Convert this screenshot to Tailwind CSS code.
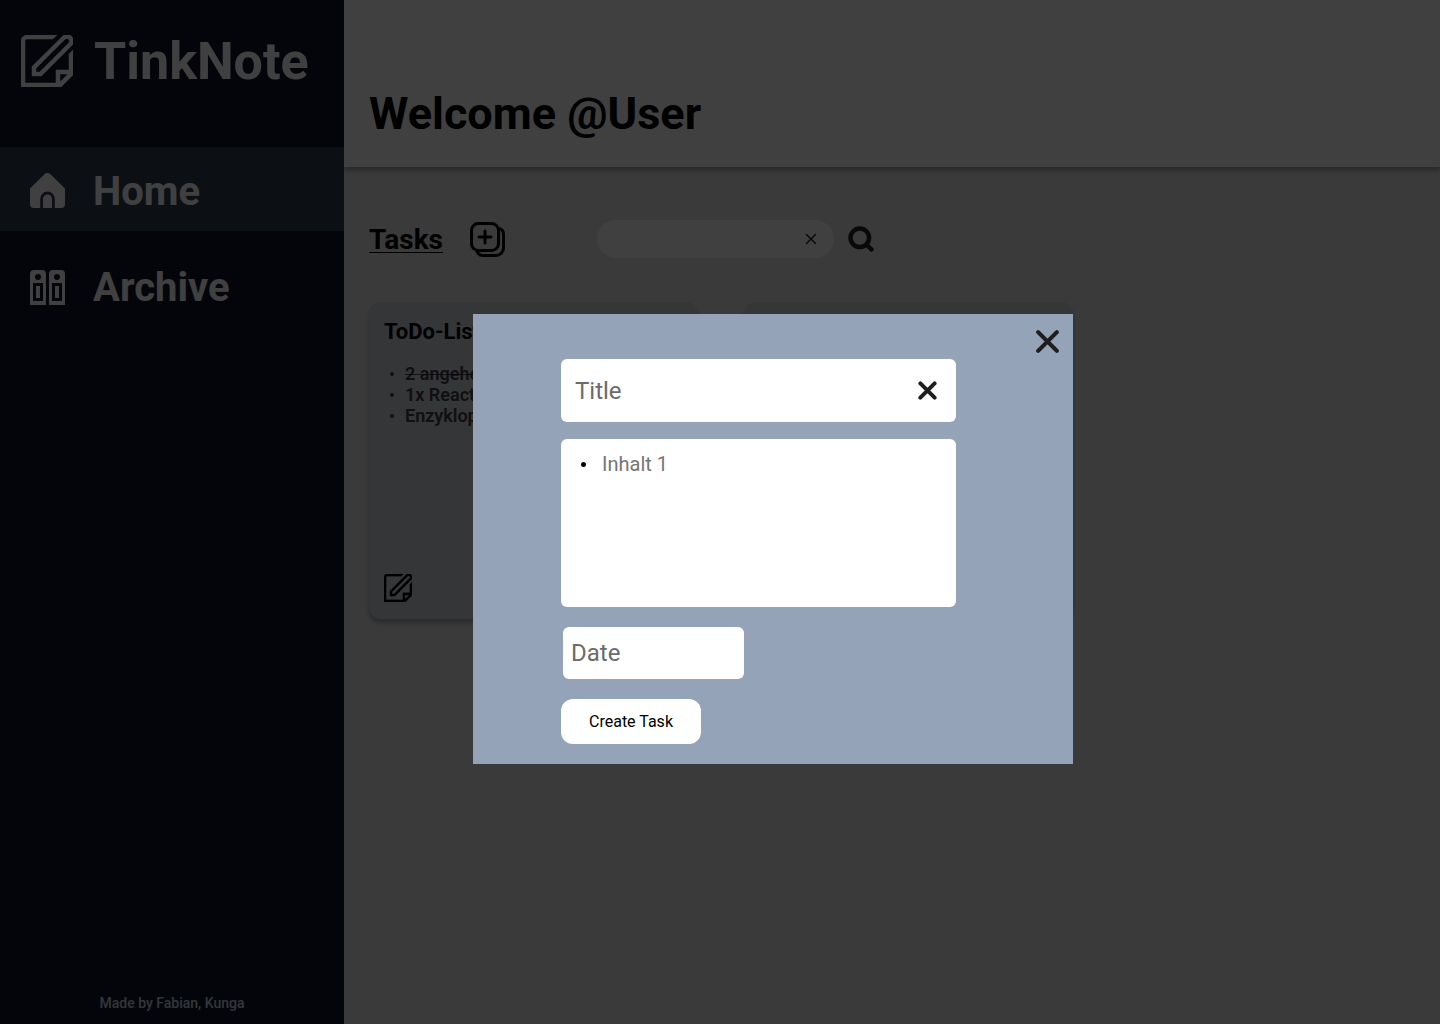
<!DOCTYPE html>
<html lang="en">
<head>
<meta charset="utf-8">
<meta name="viewport" content="width=device-width, initial-scale=1">
<title>TinkNote</title>
<script src="https://cdn.jsdelivr.net/npm/@tailwindcss/browser@4"></script>
</head>
<body class="font-[Roboto,sans-serif] text-black">
<svg class="hidden" aria-hidden="true">
  <symbol id="note-edit" viewBox="0 0 52 52">
    <path fill="currentColor" stroke="currentColor" stroke-width="0.500" fill-rule="evenodd" d="M36 0H6a6 6 0 0 0-6 6v46h40l12-12V15l-4 4v16H35v13H4V6a2 2 0 0 1 2-2h26zM39 39h8l-8 8z"/>
    <path fill="none" stroke="currentColor" stroke-width="4.500" d="M13 39v-6.500L42.750 2.750a4.600 4.600 0 0 1 6.500 6.500L19.500 39z"/>
  </symbol>
  <symbol id="cross" viewBox="0 0 24 24">
    <path fill="none" stroke="currentColor" stroke-linecap="round" d="M3 3l18 18M21 3L3 21"/>
  </symbol>
</svg>

<div class="flex min-h-screen bg-[#e5e7eb]">
  <aside class="flex w-[344px] shrink-0 flex-col bg-[#0f172a] text-white">
    <div class="flex h-[147px] items-start gap-[21px] pt-[35px] pl-[21px]">
      <svg class="size-[52px]"><use href="#note-edit"/></svg>
      <span class="text-[52px] leading-[54px] font-bold">TinkNote</span>
    </div>
    <nav class="flex flex-col gap-[14px] text-[40px] font-bold">
      <a href="#" class="flex h-[84px] items-center gap-7 bg-[#334155] pt-[3px] pl-[30px]">
        <svg class="size-[35px]" viewBox="0 0 35 35" fill="currentColor">
          <path d="M14.500 1.200a4.500 4.500 0 0 1 6 0L35 15.500V31a4 4 0 0 1-4 4h-6.200V25.800a7.300 7.300 0 0 0-14.600 0V35H4a4 4 0 0 1-4-4V15.500z"/>
          <path d="M13 35v-9a4.500 4.500 0 0 1 9 0v9z"/>
        </svg>
        <span class="pt-0.5">Home</span>
      </a>
      <a href="#" class="flex h-[84px] items-center gap-7 pl-[30px]">
        <svg class="size-[35px]" viewBox="0 0 35 35" fill="currentColor" fill-rule="evenodd">
          <path d="M0 35V4a4 4 0 0 1 4-4h8a4 4 0 0 1 4 4v31zM8 4a3 3 0 0 0 0 6a3 3 0 0 0 0-6zM3 13v18h10V13zM6 16h4v12H6z"/>
          <path d="M19 35V4a4 4 0 0 1 4-4h8a4 4 0 0 1 4 4v31zM27 4a3 3 0 0 0 0 6a3 3 0 0 0 0-6zM22 13v18h10V13zM25 16h4v12h-4z"/>
        </svg>
        <span class="pt-0.5">Archive</span>
      </a>
    </nav>
    <p class="mt-auto pb-[11px] text-center text-sm font-medium text-[#cbd5e1]">Made by Fabian, Kunga</p>
  </aside>

  <main class="min-w-0 flex-1">
    <header class="flex h-[167px] items-end bg-white px-[25px] pb-[26px] shadow-[0_4px_4px_rgba(0,0,0,0.25)]">
      <h1 class="text-[45px] leading-[54px] font-bold">Welcome @User</h1>
    </header>

    <section class="px-[25px] pt-[53px]">
      <div class="flex h-[38px] items-center">
        <h2 class="pt-0.5 text-[28px] leading-8 font-bold underline decoration-1 underline-offset-3">Tasks</h2>
        <button type="button" aria-label="Add task" class="ml-[27px] pt-0.5">
          <svg class="size-[36px]" viewBox="0 0 36 36" fill="none" stroke="currentColor" stroke-width="3" stroke-linecap="round">
            <rect x="1.500" y="1.500" width="27" height="27" rx="7"/>
            <path d="M15 9v12M9 15h12M29 6.500c3 .8 4.500 3 4.500 6V26a7.500 7.500 0 0 1-7.500 7.500H13c-3 0-5.200-1.500-6-4.500"/>
          </svg>
        </button>
        <form class="ml-[91px] flex items-center">
          <div class="flex h-[38px] w-[237px] items-center rounded-full bg-white pr-[17px] pl-4">
            <input type="text" aria-label="Search tasks" class="min-w-0 flex-1 outline-none">
            <button type="button" aria-label="Clear search" class="text-neutral-800"><svg class="size-3" stroke-width="3"><use href="#cross"/></svg></button>
          </div>
          <button type="submit" aria-label="Search" class="ml-[14px] text-neutral-800">
            <svg class="size-[26px]" viewBox="0 0 26 26" fill="none" stroke="currentColor" stroke-width="4.500" stroke-linecap="round"><circle cx="11.800" cy="11.800" r="9.300"/><path d="M19 19l4.500 4.500"/></svg>
          </button>
        </form>
      </div>

      <div class="mt-11 flex flex-wrap gap-[46px]">
        <article class="flex h-[317px] w-[329px] flex-col rounded-xl bg-[#d1d5db] px-[15px] pt-4 pb-[17px] shadow-[0_4px_4px_rgba(0,0,0,0.25)]">
          <h3 class="text-[22px] leading-7 font-bold">ToDo-List</h3>
          <ul class="mt-[17px] pl-[6px] text-lg leading-[21px] font-semibold text-neutral-700">
            <li class="flex items-center gap-[11px] before:size-1 before:rounded-full before:bg-current"><s class="decoration-black/60 decoration-1">2 angehen</s></li>
            <li class="flex items-center gap-[11px] before:size-1 before:rounded-full before:bg-current">1x React</li>
            <li class="flex items-center gap-[11px] before:size-1 before:rounded-full before:bg-current">Enzyklopädie</li>
          </ul>
          <button type="button" aria-label="Edit task" class="mt-auto self-start"><svg class="size-7"><use href="#note-edit"/></svg></button>
        </article>
        <article class="h-[317px] w-[329px] rounded-xl bg-[#d1d5db] shadow-[0_4px_4px_rgba(0,0,0,0.25)]"></article>
      </div>
    </section>
  </main>
</div>

<div class="fixed inset-0 flex items-center justify-center bg-black/75 pt-[54px] pl-[106px]">
  <form role="dialog" aria-label="Create task" class="relative flex h-[450px] w-[600px] flex-col items-start bg-[#94a3b8] pt-[45px] pl-[88px]">
    <button type="button" aria-label="Close" class="absolute top-[15px] right-[13px] text-[#1e1e1e]"><svg class="size-[25px]" stroke-width="4"><use href="#cross"/></svg></button>
    <div class="flex h-[63px] w-[395px] items-center rounded-md bg-white pr-[19px] pl-[14px]">
      <input type="text" aria-label="Title" placeholder="Title" class="min-w-0 flex-1 text-2xl outline-none placeholder:text-[#6b6b6b]">
      <button type="button" aria-label="Clear title" class="text-[#1e1e1e]"><svg class="size-[19px]" stroke-width="5"><use href="#cross"/></svg></button>
    </div>
    <ul class="mt-[17px] h-[168px] w-[395px] rounded-md bg-white pt-[11px] pl-5 text-xl">
      <li class="flex items-center gap-4 before:size-[5px] before:rounded-full before:bg-black"><input type="text" aria-label="Content" placeholder="Inhalt 1" class="w-80 outline-none placeholder:text-[#757575]"></li>
    </ul>
    <input type="text" aria-label="Date" placeholder="Date" class="mt-5 ml-[2px] h-[52px] w-[181px] rounded-md bg-white px-2 text-2xl outline-none placeholder:text-[#6b6b6b]">
    <button type="submit" class="mt-5 h-[45px] w-[140px] rounded-xl bg-white text-base">Create Task</button>
  </form>
</div>
</body>
</html>
